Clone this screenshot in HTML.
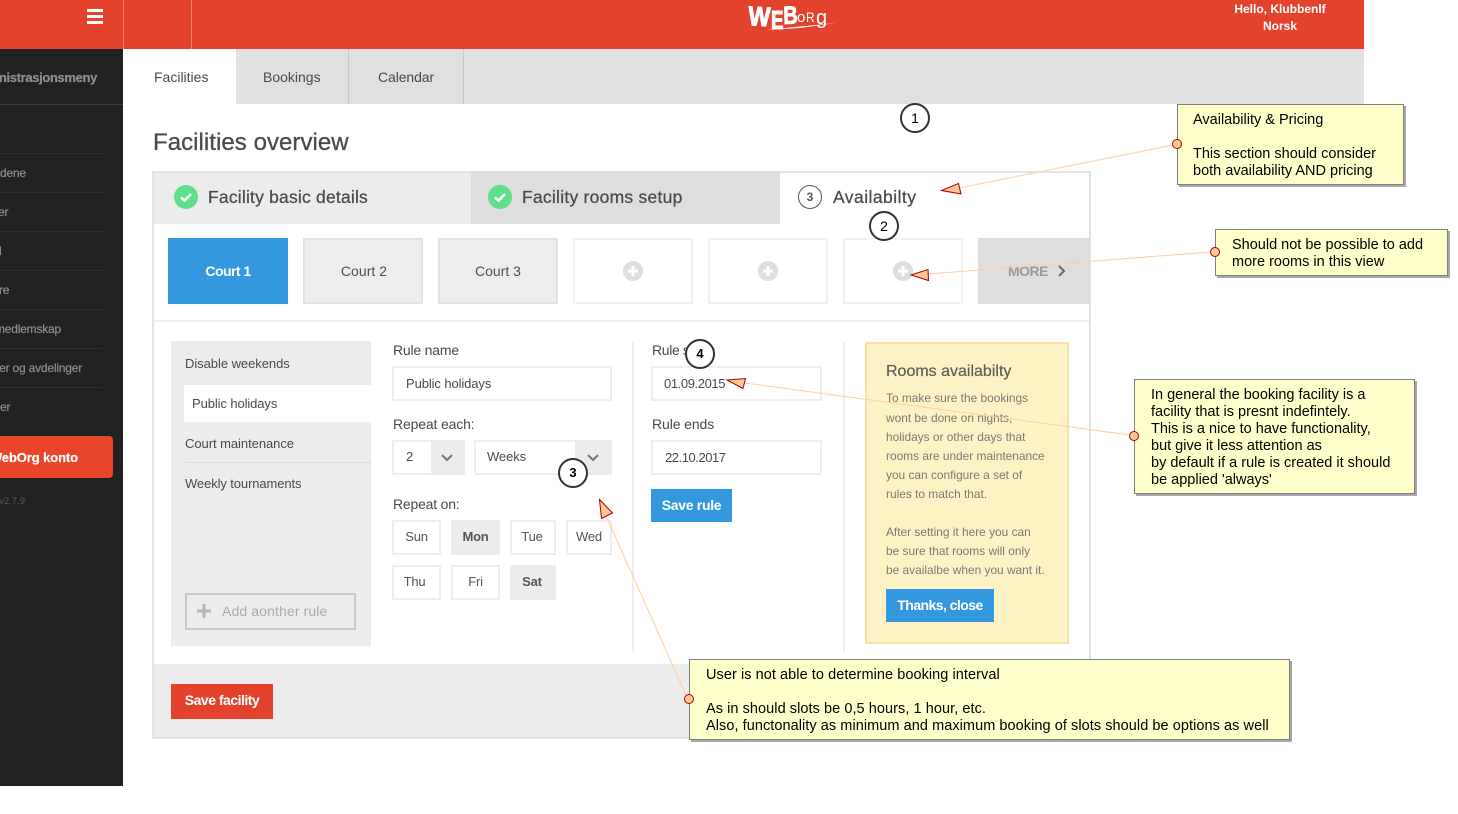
<!DOCTYPE html>
<html>
<head>
<meta charset="utf-8">
<style>
html,body{margin:0;padding:0;background:#fff;}
body{width:1458px;height:814px;position:relative;overflow:hidden;font-family:"Liberation Sans",Arial,sans-serif;color:#4a4a4a;font-size:13px;}
.b{position:absolute;box-sizing:border-box;}
.t{position:absolute;white-space:nowrap;line-height:18px;}
.c{text-align:center;}
.inp{position:absolute;box-sizing:border-box;border:2px solid #eee;background:#fff;}
.tile{position:absolute;top:238px;width:120px;height:66px;box-sizing:border-box;}
.full{background:#ededed;border:2px solid #e2e2e2;text-align:center;line-height:62px;font-size:14px;color:#4f4f4f;}
.empty{border:2px solid #f0f0f0;background:#fff;}
.day{position:absolute;box-sizing:border-box;border:2px solid #eee;height:35px;line-height:29px;text-align:center;font-size:13px;color:#555;background:#fff;letter-spacing:-.2px;}
.on{background:#ececec;border-color:#ececec;font-weight:bold;}
.ln{position:absolute;left:0;width:103px;height:1px;background:#2d2d2d;}
.sd{position:absolute;white-space:nowrap;font-size:12px;line-height:16px;color:#8f8f8f;letter-spacing:-.2px;-webkit-text-stroke:.2px #8f8f8f;}
.note{position:absolute;box-sizing:border-box;background:#ffffcc;border:1px solid #808080;box-shadow:2px 2px 0 #a8a8a8;color:#000;font-size:14.5px;line-height:17px;white-space:nowrap;}
.note div{height:17px;}
.num{position:absolute;width:30px;height:30px;box-sizing:border-box;border:2px solid #333;border-radius:50%;background:#fff;color:#000;text-align:center;font-size:14px;line-height:26px;}
.yp{position:absolute;left:886px;white-space:nowrap;font-size:11.9px;line-height:19px;color:#7a7a72;}
.lg{position:absolute;color:#fff;font-weight:bold;line-height:1;white-space:nowrap;}
</style>
</head>
<body>

<!-- header -->
<div class="b" style="left:0;top:0;width:1364px;height:49px;background:#e3422d;"></div>
<div class="b" style="left:123px;top:0;width:1px;height:49px;background:#ef7f70;"></div>
<div class="b" style="left:191px;top:0;width:1px;height:49px;background:#ef7f70;"></div>
<div class="b" style="left:87px;top:9px;width:16px;height:3px;background:#fff;"></div>
<div class="b" style="left:87px;top:15px;width:16px;height:3px;background:#fff;"></div>
<div class="b" style="left:87px;top:21px;width:16px;height:3px;background:#fff;"></div>

<!-- logo -->
<div class="lg" style="left:749px;top:3px;font-size:27px;-webkit-text-stroke:1.1px #fff;transform-origin:0 0;transform:scaleX(.86) rotate(3deg);">W</div>
<div class="lg" style="left:771px;top:7px;font-size:26px;-webkit-text-stroke:1.1px #fff;transform-origin:0 0;transform:scaleX(.72);">E</div>
<div class="lg" style="left:783px;top:4px;font-size:25px;-webkit-text-stroke:.9px #fff;transform-origin:0 0;transform:scaleX(.8) rotate(-2deg);">B</div>
<div class="lg" style="left:797px;top:10px;font-size:15px;font-weight:normal;">o</div>
<div class="lg" style="left:806px;top:10px;font-size:14px;font-weight:normal;transform-origin:0 0;transform:scaleX(.85);">R</div>
<div class="lg" style="left:816px;top:8px;font-size:20px;font-weight:normal;">g</div>
<svg class="b" style="left:760px;top:20px;" width="80" height="14"><path d="M4 10 L76 3 L40 8 Z" fill="#fff"/></svg>

<div class="t c" style="left:1200px;width:160px;top:0;font-size:12px;font-weight:bold;color:#fff;">Hello, Klubbenlf</div>
<div class="t c" style="left:1200px;width:160px;top:17px;font-size:12px;font-weight:bold;color:#fff;">Norsk</div>

<!-- sidebar -->
<div class="b" style="left:0;top:49px;width:123px;height:737px;background:#212121;overflow:hidden;">
  <div class="b" style="left:0;top:55px;width:123px;height:1px;background:#3c3c3c;"></div>
  <div class="ln" style="top:104px"></div>
  <div class="ln" style="top:143px"></div>
  <div class="ln" style="top:182px"></div>
  <div class="ln" style="top:221px"></div>
  <div class="ln" style="top:260px"></div>
  <div class="ln" style="top:299px"></div>
  <div class="ln" style="top:338px"></div>
  <div class="sd" style="right:26px;top:21px;font-size:13px;font-weight:bold;letter-spacing:-.35px;">Administrasjonsmeny</div>
  <div class="sd" style="left:0;top:116px;">dene</div>
  <div class="sd" style="left:-2px;top:155px;">er</div>
  <div class="sd" style="left:-5px;top:194px;">d</div>
  <div class="sd" style="left:-1px;top:233px;">re</div>
  <div class="sd" style="right:62px;top:272px;">medlemskap</div>
  <div class="sd" style="right:41px;top:311px;">er og avdelinger</div>
  <div class="sd" style="left:0;top:350px;">er</div>
  <div class="b" style="left:-6px;top:387px;width:119px;height:42px;background:#e8452a;border-radius:4px;"></div>
  <div class="sd" style="right:45px;top:401px;color:#fff;font-size:13px;font-weight:bold;letter-spacing:-.1px;-webkit-text-stroke:.2px #fff;">WebOrg konto</div>
  <div class="sd" style="right:98px;top:445px;font-size:9.5px;color:#5a5a5a;letter-spacing:0;-webkit-text-stroke:0;">v2.7.9</div>
</div>

<!-- tabs -->
<div class="b" style="left:236px;top:49px;width:1128px;height:55px;background:#e1e0e1;"></div>
<div class="b" style="left:348px;top:49px;width:1px;height:55px;background:#c9c9c9;"></div>
<div class="b" style="left:463px;top:49px;width:1px;height:55px;background:#c9c9c9;"></div>
<div class="t" style="left:154px;top:68px;font-size:14px;">Facilities</div>
<div class="t" style="left:263px;top:68px;font-size:14px;">Bookings</div>
<div class="t" style="left:378px;top:68px;font-size:14px;letter-spacing:-.1px;">Calendar</div>

<div class="t" style="left:153px;top:129px;font-size:24px;line-height:28px;-webkit-text-stroke:.3px #4a4a4a;letter-spacing:.05px;">Facilities overview</div>

<!-- panel -->
<div class="b" style="left:152px;top:171px;width:939px;height:568px;border:2px solid #e4e4e4;"></div>
<div class="b" style="left:154px;top:173px;width:317px;height:51px;background:#edecec;"></div>
<div class="b" style="left:471px;top:171px;width:309px;height:53px;background:#dedede;"></div>

<svg class="b" style="left:174px;top:185px;" width="24" height="24"><circle cx="12" cy="12" r="12" fill="#5fdf8c"/><path d="M7 12.5 L10.5 15.5 L17 9" fill="none" stroke="#fff" stroke-width="2.6"/></svg>
<svg class="b" style="left:488px;top:185px;" width="24" height="24"><circle cx="12" cy="12" r="12" fill="#5fdf8c"/><path d="M7 12.5 L10.5 15.5 L17 9" fill="none" stroke="#fff" stroke-width="2.6"/></svg>
<div class="b" style="left:798px;top:185px;width:24px;height:24px;border:1px solid #555;border-radius:50%;text-align:center;font-size:12px;line-height:22px;font-weight:bold;color:#555;background:#fff;">3</div>

<div class="t" style="left:208px;top:188px;font-size:17.5px;letter-spacing:.2px;-webkit-text-stroke:.25px #4a4a4a;">Facility basic details</div>
<div class="t" style="left:522px;top:188px;font-size:17.5px;letter-spacing:.25px;-webkit-text-stroke:.25px #4a4a4a;">Facility rooms setup</div>
<div class="t" style="left:833px;top:188px;font-size:17.5px;letter-spacing:.45px;-webkit-text-stroke:.25px #4a4a4a;">Availabilty</div>

<!-- court tiles -->
<div class="tile" style="left:168px;background:#3498de;color:#fff;text-align:center;line-height:66px;font-size:14px;font-weight:bold;letter-spacing:-.55px;">Court 1</div>
<div class="tile full" style="left:303px;padding-left:2px;letter-spacing:.05px;">Court 2</div>
<div class="tile full" style="left:438px;">Court 3</div>
<div class="tile empty" style="left:573px;"></div>
<div class="tile empty" style="left:708px;"></div>
<div class="tile empty" style="left:843px;"></div>
<svg class="b" style="left:623px;top:261px;" width="20" height="20"><circle cx="10" cy="10" r="10" fill="#dedede"/><path d="M10 5V15M5 10H15" stroke="#fff" stroke-width="3"/></svg>
<svg class="b" style="left:758px;top:261px;" width="20" height="20"><circle cx="10" cy="10" r="10" fill="#dedede"/><path d="M10 5V15M5 10H15" stroke="#fff" stroke-width="3"/></svg>
<svg class="b" style="left:893px;top:261px;" width="20" height="20"><circle cx="10" cy="10" r="10" fill="#dedede"/><path d="M10 5V15M5 10H15" stroke="#fff" stroke-width="3"/></svg>
<div class="b" style="left:978px;top:238px;width:112px;height:66px;background:#dedede;"></div>
<div class="t" style="left:1008px;top:262px;font-size:14px;font-weight:bold;color:#9a9a9a;letter-spacing:-.5px;">MORE</div>
<svg class="b" style="left:1057px;top:265px;" width="10" height="12"><path d="M2 1 L7 6 L2 11" fill="none" stroke="#6b6b6b" stroke-width="2"/></svg>

<div class="b" style="left:154px;top:320px;width:935px;height:2px;background:#eee;"></div>

<!-- rule list -->
<div class="b" style="left:171px;top:341px;width:200px;height:305px;background:#ececec;"></div>
<div class="b" style="left:184px;top:385px;width:187px;height:37px;background:#fff;"></div>
<div class="b" style="left:185px;top:462px;width:186px;height:1px;background:#dcdcdc;"></div>
<div class="t" style="left:185px;top:355px;font-size:13px;letter-spacing:-.05px;">Disable weekends</div>
<div class="t" style="left:192px;top:395px;font-size:13px;letter-spacing:-.1px;">Public holidays</div>
<div class="t" style="left:185px;top:435px;font-size:13px;letter-spacing:-.05px;">Court maintenance</div>
<div class="t" style="left:185px;top:475px;font-size:13px;letter-spacing:-.1px;">Weekly tournaments</div>
<div class="b" style="left:185px;top:593px;width:171px;height:37px;border:2px solid #c8c8c8;"></div>
<svg class="b" style="left:197px;top:604px;" width="14" height="14"><path d="M7 0V14M0 7H14" stroke="#b5b5b5" stroke-width="3"/></svg>
<div class="t" style="left:222px;top:602px;font-size:14px;color:#ababab;letter-spacing:.12px;">Add aonther rule</div>

<!-- form -->
<div class="t" style="left:393px;top:341px;font-size:14px;letter-spacing:-.2px;">Rule name</div>
<div class="inp" style="left:392px;top:366px;width:220px;height:35px;"></div>
<div class="t" style="left:406px;top:375px;font-size:13px;letter-spacing:-.1px;">Public holidays</div>
<div class="t" style="left:393px;top:415px;font-size:14px;letter-spacing:-.15px;">Repeat each:</div>

<div class="inp" style="left:392px;top:440px;width:73px;height:35px;"></div>
<div class="b" style="left:431px;top:440px;width:34px;height:35px;background:#ececec;"></div>
<div class="t" style="left:406px;top:448px;font-size:13px;">2</div>
<svg class="b" style="left:441px;top:454px;" width="12" height="8"><path d="M1 1 L6 6 L11 1" fill="none" stroke="#777" stroke-width="2"/></svg>

<div class="inp" style="left:474px;top:440px;width:138px;height:35px;"></div>
<div class="b" style="left:575px;top:440px;width:37px;height:35px;background:#ececec;"></div>
<div class="t" style="left:487px;top:448px;font-size:13px;letter-spacing:-.1px;">Weeks</div>
<svg class="b" style="left:587px;top:454px;" width="12" height="8"><path d="M1 1 L6 6 L11 1" fill="none" stroke="#777" stroke-width="2"/></svg>

<div class="t" style="left:393px;top:495px;font-size:14px;letter-spacing:-.2px;">Repeat on:</div>
<div class="day" style="left:392px;top:520px;width:49px;">Sun</div>
<div class="day on" style="left:451px;top:520px;width:49px;">Mon</div>
<div class="day" style="left:510px;top:520px;width:46px;padding-right:2px;">Tue</div>
<div class="day" style="left:566px;top:520px;width:46px;">Wed</div>
<div class="day" style="left:392px;top:565px;width:49px;padding-right:4px;">Thu</div>
<div class="day" style="left:451px;top:565px;width:49px;">Fri</div>
<div class="day on" style="left:510px;top:565px;width:46px;padding-right:2px;">Sat</div>

<div class="b" style="left:632px;top:342px;width:2px;height:310px;background:#eee;"></div>
<div class="b" style="left:843px;top:342px;width:2px;height:310px;background:#eee;"></div>

<div class="t" style="left:652px;top:341px;font-size:14px;letter-spacing:-.35px;">Rule starts</div>
<div class="inp" style="left:651px;top:366px;width:171px;height:35px;"></div>
<div class="t" style="left:664px;top:375px;font-size:13px;letter-spacing:-.4px;">01.09.2015</div>
<div class="t" style="left:652px;top:415px;font-size:14px;letter-spacing:-.1px;">Rule ends</div>
<div class="inp" style="left:651px;top:440px;width:171px;height:35px;"></div>
<div class="t" style="left:665px;top:449px;font-size:13px;letter-spacing:-.45px;">22.10.2017</div>
<div class="b" style="left:651px;top:489px;width:81px;height:33px;background:#3498de;color:#fff;text-align:center;line-height:33px;font-size:14px;font-weight:bold;letter-spacing:-.3px;">Save rule</div>

<!-- yellow box -->
<div class="b" style="left:865px;top:342px;width:204px;height:302px;background:#fdf2c3;border:2px solid #f3e3ab;"></div>
<div class="t" style="left:886px;top:363px;font-size:16px;color:#5e5e58;-webkit-text-stroke:.2px #5e5e58;">Rooms availabilty</div>
<div class="yp" style="top:389px;">To make sure the bookings</div>
<div class="yp" style="top:409px;">wont be done on nights,</div>
<div class="yp" style="top:428px;">holidays or other days that</div>
<div class="yp" style="top:447px;">rooms are under maintenance</div>
<div class="yp" style="top:466px;">you can configure a set of</div>
<div class="yp" style="top:485px;">rules to match that.</div>
<div class="yp" style="top:523px;">After setting it here you can</div>
<div class="yp" style="top:542px;">be sure that rooms will only</div>
<div class="yp" style="top:561px;">be availalbe when you want it.</div>
<div class="b" style="left:886px;top:589px;width:108px;height:33px;background:#3498de;color:#fff;text-align:center;line-height:33px;font-size:14px;font-weight:bold;letter-spacing:-.55px;">Thanks, close</div>

<!-- footer -->
<div class="b" style="left:154px;top:664px;width:935px;height:73px;background:#ececec;"></div>
<div class="b" style="left:171px;top:684px;width:102px;height:35px;background:#e3422d;color:#fff;text-align:center;line-height:33px;font-size:14px;font-weight:bold;letter-spacing:-.5px;">Save facility</div>

<!-- notes -->
<div class="note" style="left:1177px;top:104px;width:227px;height:81px;padding:7px 0 0 15px;"><div>Availability &amp; Pricing</div><div></div><div>This section should consider</div><div>both availability AND pricing</div></div>
<div class="note" style="left:1215px;top:229px;width:233px;height:47px;padding:7px 0 0 16px;"><div>Should not be possible to add</div><div>more rooms in this view</div></div>
<div class="note" style="left:1134px;top:379px;width:281px;height:115px;padding:7px 0 0 16px;"><div>In general the booking facility is a</div><div>facility that is presnt indefintely.</div><div>This is a nice to have functionality,</div><div>but give it less attention as</div><div>by default if a rule is created it should</div><div>be applied 'always'</div></div>
<div class="note" style="left:689px;top:659px;width:601px;height:81px;padding:7px 0 0 16px;letter-spacing:.06px;"><div>User is not able to determine booking interval</div><div></div><div>As in should slots be 0,5 hours, 1 hour, etc.</div><div>Also, functonality as minimum and maximum booking of slots should be options as well</div></div>

<!-- connectors -->
<svg class="b" style="left:0;top:0;" width="1458" height="814">
  <g stroke="#ffcf9f" stroke-width="1" fill="none">
    <path d="M1173 145 L959 188"/>
    <path d="M1211 252 L928 274"/>
    <path d="M1130 435 L745 383"/>
    <path d="M686 695 L606 516"/>
  </g>
  <g fill="#ffc896" stroke="#a50000" stroke-width="1">
    <path d="M941.5 190.5 L958.5 183.5 L961 194 Z"/>
    <path d="M911 275 L928 269.5 L928.5 280.5 Z"/>
    <path d="M727 380 L745.5 378.5 L743 388.5 Z"/>
    <path d="M599.5 499.5 L612.5 513 L601.5 518.5 Z"/>
    <circle cx="1177" cy="144" r="4.5"/>
    <circle cx="1215" cy="252" r="4.5"/>
    <circle cx="1134" cy="436" r="4.5"/>
    <circle cx="689" cy="699" r="4.5"/>
  </g>
</svg>

<div class="num" style="left:900px;top:103px;">1</div>
<div class="num" style="left:869px;top:211px;">2</div>
<div class="num" style="left:558px;top:458px;font-weight:bold;font-size:13px;">3</div>
<div class="num" style="left:685px;top:339px;font-weight:bold;font-size:13px;">4</div>

</body>
</html>
